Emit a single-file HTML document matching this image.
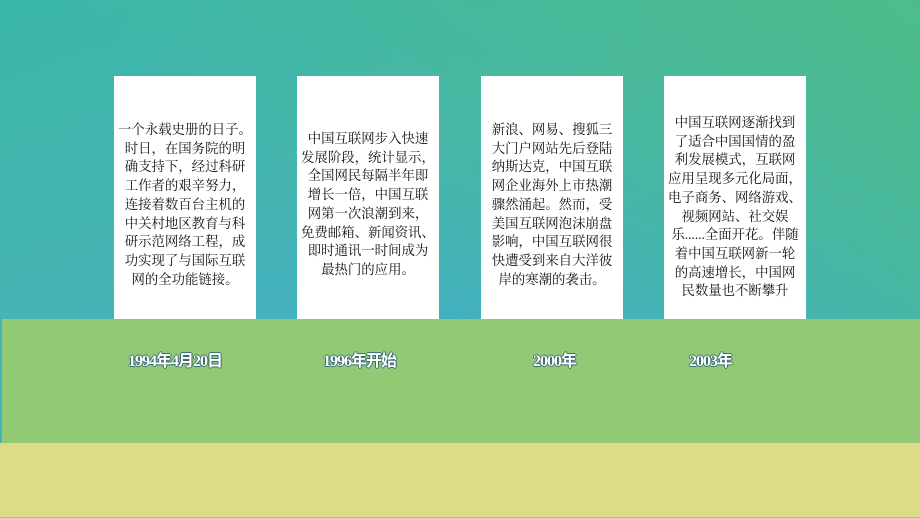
<!DOCTYPE html>
<html><head><meta charset="utf-8"><style>
body{margin:0;width:920px;height:518px;overflow:hidden;position:relative;background:linear-gradient(160deg,#3ab7a8 0%,#46b4b2 35%,#40acd0 70%,#3aa6dc 100%);font-family:"Liberation Serif","Noto Serif CJK SC",serif;}
.bg2{position:absolute;inset:0;background:linear-gradient(225deg,#4cbd8a 0%,rgba(76,189,138,0) 60%);}
.card{position:absolute;top:76px;width:142px;height:244px;background:#fff;}
.t{position:absolute;left:0;right:0;text-align:center;font-size:13.4px;line-height:18.7px;color:#111;white-space:nowrap;}
.green{position:absolute;left:2px;right:0;top:319px;height:124px;background:#92c974;}
.yellow{position:absolute;left:0;right:0;top:443px;height:74px;background:#dcdc88;}
.line{position:absolute;left:0;right:0;top:517px;height:1px;background:#9cc890;}
.lab{position:absolute;top:347px;font-size:16px;font-weight:bold;color:#fff;font-family:"Liberation Serif","Noto Sans CJK SC",sans-serif;text-shadow:-1px 0 #3a6a70,1px 0 #3a6a70,0 -1px #3a6a70,0 1px #3a6a70;letter-spacing:-1px;}
</style></head><body>
<div class="bg2"></div>
<div class="card" style="left:114px"><div class="t" style="top:45px;left:-4px;right:-4px">一个永载史册的日子。<br>时日，在国务院的明<br>确支持下，经过科研<br>工作者的艰辛努力，<br>连接着数百台主机的<br>中关村地区教育与科<br>研示范网络工程，成<br>功实现了与国际互联<br>网的全功能链接。</div></div>
<div class="card" style="left:297px"><div class="t" style="top:54px;left:-4px;right:-4px">中国互联网步入快速<br>发展阶段，统计显示，<br>全国网民每隔半年即<br>增长一倍，中国互联<br>网第一次浪潮到来，<br>免费邮箱、新闻资讯、<br>即时通讯一时间成为<br>最热门的应用。</div></div>
<div class="card" style="left:481px"><div class="t" style="top:45px">新浪、网易、搜狐三<br>大门户网站先后登陆<br>纳斯达克，中国互联<br>网企业海外上市热潮<br>骤然涌起。然而，受<br>美国互联网泡沫崩盘<br>影响，中国互联网很<br>快遭受到来自大洋彼<br>岸的寒潮的袭击。</div></div>
<div class="card" style="left:664px"><div class="t" style="top:38px;left:-4px;right:-4px">中国互联网逐渐找到<br>了适合中国国情的盈<br>利发展模式，互联网<br>应用呈现多元化局面，<br>电子商务、网络游戏、<br>视频网站、社交娱<br>乐......全面开花。伴随<br>着中国互联网新一轮<br>的高速增长，中国网<br>民数量也不断攀升</div></div>
<div class="green"></div><div class="yellow"></div><div class="line"></div>
<div class="lab" style="left:128px">1994年4月20日</div>
<div class="lab" style="left:323px">1996年开始</div>
<div class="lab" style="left:533px">2000年</div>
<div class="lab" style="left:689px">2003年</div>
</body></html>
